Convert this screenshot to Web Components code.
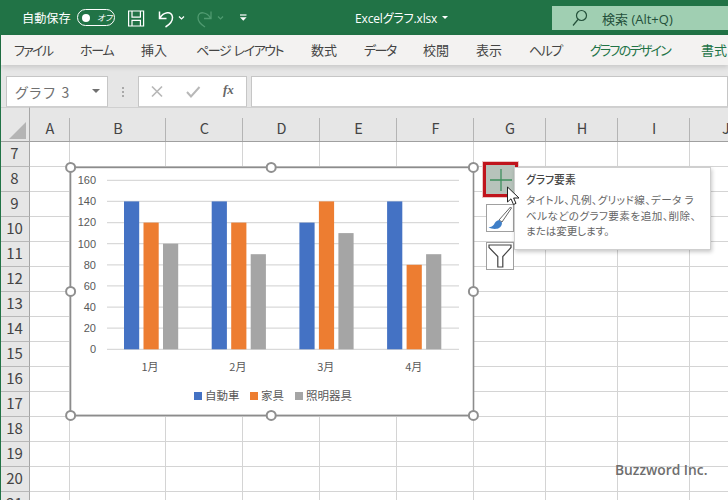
<!DOCTYPE html>
<html lang="ja">
<head>
<meta charset="utf-8">
<title>Excel</title>
<style>
html,body{margin:0;height:500px;overflow:hidden}
body{background:#217346;font-family:"Noto Sans CJK JP","Noto Sans",sans-serif;font-feature-settings:"palt";display:flex;flex-direction:column}
</style>
</head>
<body>
<x-titlebar></x-titlebar>
<x-tabs>
  <x-tab w="66" ls="-1.7">ファイル</x-tab>
  <x-tab w="61" ls="-1.3">ホーム</x-tab>
  <x-tab w="55">挿入</x-tab>
  <x-tab w="115" ls="-1.45">ページ レイアウト</x-tab>
  <x-tab w="53">数式</x-tab>
  <x-tab w="59" ls="-1.6">データ</x-tab>
  <x-tab w="53">校閲</x-tab>
  <x-tab w="53">表示</x-tab>
  <x-tab w="61" ls="-1.5">ヘルプ</x-tab>
  <x-tab w="111" ls="-1.75" accent>グラフのデザイン</x-tab>
  <x-tab w="30" accent>書式</x-tab>
</x-tabs>
<x-formula></x-formula>
<x-sheet>
  <x-chart></x-chart>
  <x-chart-tools></x-chart-tools>
  <x-tip heading="グラフ要素"><x-tip-line ls=".4">タイトル、凡例、グリッド線、データ ラ</x-tip-line><x-tip-line ls=".45">ベルなどのグラフ要素を追加、削除、</x-tip-line><x-tip-line ls="-.1">または変更します。</x-tip-line></x-tip>
  <x-pointer></x-pointer>
  <x-mark>Buzzword Inc.</x-mark>
</x-sheet>
<script>
function shadow(el, html){ el.attachShadow({mode:'open'}).innerHTML = html; }

customElements.define('x-titlebar', class extends HTMLElement{
  connectedCallback(){ shadow(this, `<style>
    :host{display:flex;align-items:center;height:35px;flex:none;background:#217346;color:#fff;font-size:12px;position:relative}
    .auto{margin-left:22px;width:55px;white-space:nowrap;font-size:12.2px}
    .toggle{width:36px;height:15px;border:1.2px solid #fff;border-radius:9px;display:flex;align-items:center;box-sizing:content-box}
    .toggle i{width:8px;height:8px;border-radius:50%;background:#fff;margin-left:4px;flex:none}
    .toggle span{font-size:8.5px;margin-left:7px;line-height:1;font-style:italic}
    svg{display:block;flex:none}
    .title{position:absolute;left:355px;top:0;height:35px;display:flex;align-items:center;font-family:"Open Sans","Noto Sans CJK JP",sans-serif;font-size:12px;white-space:nowrap;letter-spacing:-.15px}
    .caret{width:0;height:0;border:3.5px solid transparent;border-top:3.5px solid #fff;border-bottom:0;margin-left:5px}
    .search{position:absolute;left:552px;top:6px;width:176px;height:24px;background:#a0cfb2;display:flex;align-items:center;color:#24503a;font-family:"Open Sans","Noto Sans CJK JP",sans-serif;font-size:13px}
    .search svg{margin-left:20px}
    .search span{margin-left:14px;white-space:nowrap}
    </style>
    <span class="auto">自動保存</span>
    <span class="toggle"><i></i><span>オフ</span></span>
    <svg width="120" height="35" viewBox="115 0 120 35" fill="none" stroke="#fff">
      <path stroke-width="1.2" d="M128.6 11h15v15h-15zM132 11v6.2h8.4V11M132 26v-5.6h8.4V26"/>
      <path stroke-width="1.5" d="M159.5 11.5v7h7M160 18.2C163 12.5 172 10 172.5 17.2 172.7 21 169.5 24.5 165.5 27"/>
      <path stroke-width="1.2" d="M179 16.5l2.5 2.5 2.5-2.5"/>
      <g stroke="#4f9a70"><path stroke-width="1.3" d="M211 11.5v7h-7M210.5 18.2C207.5 12.5 198.500 10 198 17.200 197.800 21 201 24.500 205 27"/>
      <path stroke-width="1.2" d="M218 16.5l2.5 2.5 2.5-2.5"/></g>
    </svg>
    <svg width="20" height="35" viewBox="235 0 20 35">
      <path d="M240 15h6.5" stroke="#fff" stroke-width="1.2"/><path d="M240 17.3h6.6l-3.3 3.4z" fill="#fff"/>
    </svg>
    <span class="title">Excelグラフ.xlsx<span class="caret"></span></span>
    <span class="search"><svg width="16" height="18" viewBox="0 0 16 18" fill="none" stroke="#24503a" stroke-width="1.2"><circle cx="9.5" cy="6.500" r="5"/><path d="M6 10.500L1 16.500"/></svg><span>検索 (Alt+Q)</span></span>`); }
});

customElements.define('x-tabs', class extends HTMLElement{
  connectedCallback(){ shadow(this, `<style>
    :host{display:flex;height:30px;flex:none;margin-left:1px;padding-left:13px;background:#f3f2f1;box-sizing:border-box;overflow:hidden;position:relative;z-index:1;box-shadow:0 2px 5px rgba(0,0,0,.14)}
    </style><slot></slot>`); }
});
customElements.define('x-tab', class extends HTMLElement{
  connectedCallback(){ shadow(this, `<style>
    :host{display:block;flex:none;width:${this.getAttribute('w')}px;font-size:13px;line-height:30px;letter-spacing:${this.getAttribute('ls')||0}px;word-spacing:2px;color:${this.hasAttribute('accent')?'#217346':'#444'};white-space:nowrap}
    </style><slot></slot>`); }
});

customElements.define('x-formula', class extends HTMLElement{
  connectedCallback(){ shadow(this, `<style>
    :host{display:flex;height:42px;flex:none;margin-left:1px;box-sizing:border-box;padding:11px 0 0 5px;background:#e6e6e6;align-items:flex-start}
    .box{height:31px;box-sizing:border-box;background:#fff;border:1px solid #c6c6c6;border-bottom-color:#cfcfcf;flex:none}
    .name{width:102px;display:flex;align-items:center;padding-left:8px;color:#707070;font-size:14px;letter-spacing:1.7px;position:relative}
    .name i{position:absolute;left:85px;top:12px;border:4px solid transparent;border-top:4.5px solid #707070;border-bottom:0}
    .dots{width:30px;flex:none;align-self:stretch;display:flex;flex-direction:column;align-items:center;gap:2px;padding-top:11px;box-sizing:border-box}
    .dots i{width:2px;height:2px;background:#a9a9a9}
    .fx{width:109px;position:relative;margin-right:4px}
    .fx svg{position:absolute;left:0;top:0}
    .fx span{position:absolute;left:84px;top:5px;font:italic bold 13px "Liberation Serif",serif;color:#666}
    .input{flex:1}
    </style>
    <div class="box name">グラフ 3<i></i></div>
    <div class="dots"><i></i><i></i><i></i></div>
    <div class="box fx"><svg width="80" height="29" fill="none"><path d="M13 9.500l10 10M23 9.500l-10 10" stroke="#b8b8b8" stroke-width="1.7"/><path d="M48 15l4 4.500 8.500-9.500" stroke="#b8b8b8" stroke-width="2"/></svg><span>fx</span></div>
    <div class="box input"></div>`); }
});

customElements.define('x-sheet', class extends HTMLElement{
  connectedCallback(){
    const cols=[['',29],['A',40],['B',96],['C',77],['D',77],['E',77],['F',77],['G',72],['H',72],['I',72],['J',72]];
    let h='';
    cols.forEach(([c],i)=>{ h+= i===0 ? `<div class="corner"><svg width="28" height="34"><path d="M8 31L25 14V31Z" fill="#b4b4b4"/></svg></div>` : `<div class="ch">${c}</div>`; });
    for(let r=7;r<=21;r++){
      h+=`<div class="rh">${r}</div>`;
      for(let i=1;i<cols.length;i++) h+='<div class="c"></div>';
    }
    shadow(this, `<style>
    :host{display:block;flex:1;min-height:0;position:relative;margin-left:1px;background:#fff;overflow:hidden}
    .grid{display:grid;grid-template-columns:${cols.map(c=>c[1]+'px').join(' ')};grid-template-rows:35px;grid-auto-rows:25px}
    .corner,.ch,.rh{background:#e6e6e6;box-sizing:border-box;color:#444;font-family:"Noto Sans CJK JP",sans-serif}
    .corner{border-right:1px solid #a6a6a6;border-bottom:1px solid #a0a0a0;border-top:1px solid #d0d0d0;overflow:hidden}
    .corner svg{display:block}
    .ch{border-top:1px solid #d0d0d0;border-bottom:1px solid #a0a0a0;position:relative;display:flex;align-items:center;justify-content:center;font-size:14.5px;padding-top:8px;line-height:1}
    .ch::after{content:"";position:absolute;right:0;top:10px;bottom:0;width:1px;background:#b4b4b4}
    .rh{border-right:1px solid #a6a6a6;border-bottom:1px solid #b8b8b8;display:flex;align-items:center;justify-content:center;font-size:15px;line-height:1;padding:0 1px 3px 0}
    .c{box-sizing:border-box;border-right:1px solid #d4d4d4;border-bottom:1px solid #d4d4d4}
    </style><div class="grid">${h}</div><slot></slot>`);
  }
});

customElements.define('x-chart', class extends HTMLElement{
  connectedCallback(){
    const y=v=>349.3-v*1.05625;
    const data=[['1月',140,120,100],['2月',140,120,90],['3月',120,140,110],['4月',140,80,90]];
    const colors=['#4472c4','#ed7d31','#a5a5a5'];
    let g='';
    for(let v=0;v<=160;v+=20){
      g+=`<path d="M107 ${y(v).toFixed(1)}H459" stroke="#d9d9d9" stroke-width="1.2"/>`;
      g+=`<text x="96" y="${(y(v)+3.8).toFixed(1)}" text-anchor="end" font-family="Liberation Sans" font-size="11" fill="#595959">${v}</text>`;
    }
    data.forEach((d,k)=>{
      const bx=124+87.7*k;
      for(let s=0;s<3;s++){
        g+=`<rect x="${(bx+19.5*s).toFixed(1)}" y="${y(d[s+1]).toFixed(1)}" width="15.2" height="${(d[s+1]*1.05625).toFixed(1)}" fill="${colors[s]}"/>`;
      }
      g+=`<text x="${(150+87.9*k).toFixed(1)}" y="371" text-anchor="middle" font-size="11" fill="#595959" font-family="Noto Sans CJK JP">${d[0]}</text>`;
    });
    const leg=[[194,'自動車',0],[250,'家具',1],[295,'照明器具',2]];
    leg.forEach(([x,t,i])=>{
      g+=`<rect x="${x}" y="392" width="8" height="8" fill="${colors[i]}"/>`;
      g+=`<text x="${x+11}" y="400" font-size="11.5" fill="#595959" font-family="Noto Sans CJK JP">${t}</text>`;
    });
    const pts=[[70.6,167.4],[271.2,167.4],[473.4,167.4],[70.6,291.4],[473.4,291.4],[70.6,415.4],[271.2,415.4],[473.4,415.4]];
    const hs=pts.map(([x,yy])=>`<circle cx="${x}" cy="${yy}" r="4.5" fill="#fff" stroke="#8f8f8f" stroke-width="2"/>`).join('');
    shadow(this, `<style>
    :host{display:block;position:absolute;left:59px;top:50px;width:424px;height:269px}
    svg{display:block;overflow:visible}
    </style><svg width="424" height="269" viewBox="60 157 424 269">
      <rect x="70.5" y="167.4" width="403" height="248" fill="#fff" stroke="#8c8c8c" stroke-width="1.6"/>${g}${hs}</svg>`);
  }
});

customElements.define('x-chart-tools', class extends HTMLElement{
  connectedCallback(){ shadow(this, `<style>
    :host{display:flex;flex-direction:column;align-items:flex-start;position:absolute;left:482px;top:55px;width:35px}
    .b{box-sizing:border-box;width:28px;height:28px;margin-left:3px;background:#fff;border:1px solid #a0a0a0;flex:none}
    .b svg{display:block}
    .plus{width:35px;height:35px;margin-left:0;border:3px solid #c0141c;outline:1px solid #eec5c5;background:#b7c3bb;margin-bottom:7px;display:flex;align-items:center;justify-content:center}
    .brush{margin-bottom:10px}
    </style>
    <div class="b plus"><svg width="22" height="22" fill="none"><path d="M11 0v22M0 11h22" stroke="#3f8f5e" stroke-width="1.3"/></svg></div>
    <div class="b brush"><svg width="26" height="26" viewBox="0 0 26 26" fill="none"><path d="M23.500 2L24.500 3 15 17 12 15Z" fill="#fff" stroke="#555" stroke-width=".9"/><path d="M12 15c-3 .5-4 2.500-5 4.500-1 1.500-3 2.500-5.500 3 3 1.500 8 2 10.500.5 2-1 3-3 3-5.500z" fill="#3f7fc8"/></svg></div>
    <div class="b"><svg width="26" height="26" viewBox="0 0 26 26" fill="none"><path d="M2 2H24V4.500L15.800 13.500V24H10.800V13.500L2 4.500Z" stroke="#444" stroke-width="1.2"/></svg></div>`); }
});

customElements.define('x-tip', class extends HTMLElement{
  connectedCallback(){ shadow(this, `<style>
    :host{display:block;position:absolute;left:513px;top:60px;width:197px;height:83px;box-sizing:border-box;background:#fff;border:1px solid #cfcfcf;box-shadow:1px 2px 4px rgba(0,0,0,.22);padding:4px 0 0 11px;font-size:10.6px;color:#666;white-space:nowrap}
    h4{margin:0 0 5px;font-size:10.8px;font-weight:500;color:#444;line-height:15px}
    </style><h4>${this.getAttribute('heading')}</h4><slot></slot>`); }
});
customElements.define('x-tip-line', class extends HTMLElement{
  connectedCallback(){ shadow(this, `<style>
    :host{display:block;line-height:15.5px;letter-spacing:${this.getAttribute('ls')||0}px}
    </style><slot></slot>`); }
});

customElements.define('x-pointer', class extends HTMLElement{
  connectedCallback(){ shadow(this, `<style>
    :host{display:block;position:absolute;left:505px;top:79px;width:16px;height:22px}
    svg{display:block}
    </style><svg width="16" height="22" viewBox="0 0 16 22"><path d="M1.500 1V16L5 12.800 7.500 18.500 10 17.400 7.600 12H13Z" fill="#fff" stroke="#222" stroke-width="1"/></svg>`); }
});

customElements.define('x-mark', class extends HTMLElement{
  connectedCallback(){ shadow(this, `<style>
    :host{display:block;position:absolute;left:614px;top:353px;font:600 13.8px/20px "Open Sans",sans-serif;color:#6e6e6e;white-space:nowrap}
    </style><slot></slot>`); }
});
</script>
</body>
</html>
